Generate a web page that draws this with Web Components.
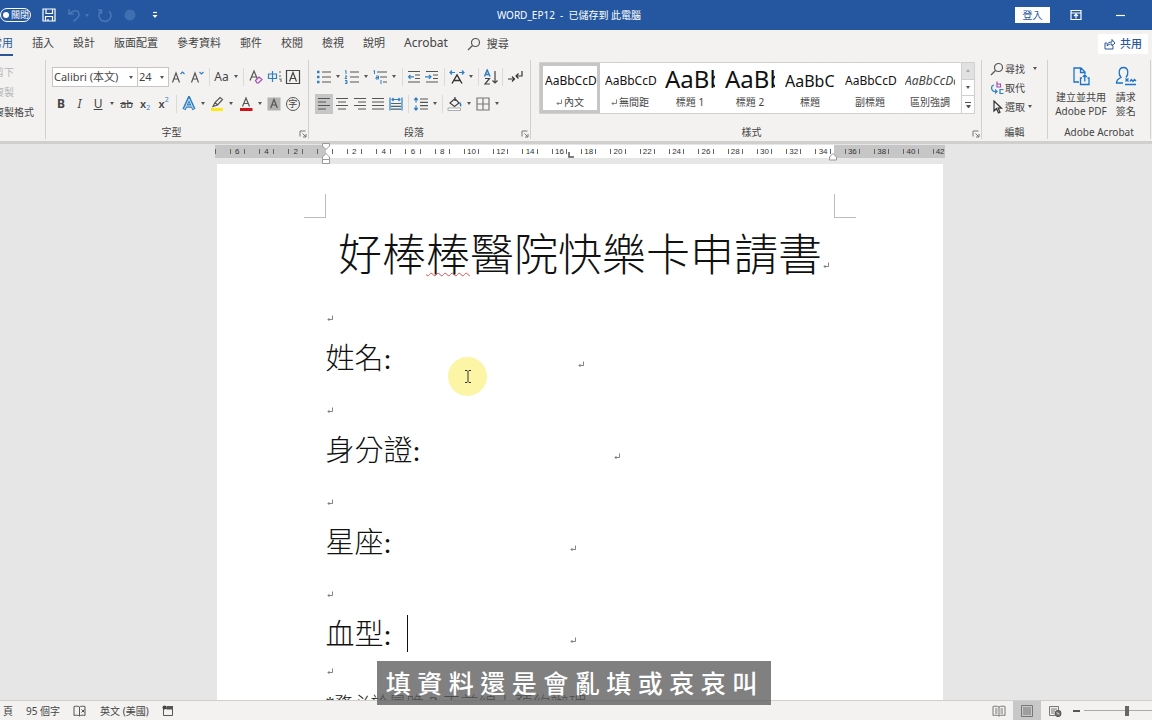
<!DOCTYPE html>
<html lang="zh-Hant">
<head>
<meta charset="utf-8">
<title>WORD_EP12</title>
<style>
html,body{margin:0;height:100%}
body{overflow:hidden;font:11px/16px "Noto Sans","Noto Sans CJK TC",sans-serif;color:#444}
</style>
</head>
<body>
<word-app></word-app>
<script>
const svg=(w,h,body)=>`<svg width="${w}" height="${h}" viewBox="0 0 ${w} ${h}" fill="none" stroke="#555" stroke-width="1.2" aria-hidden="true">${body}</svg>`;
const B='#2f7fc1';
const ICON={
save:svg(14,14,`<g stroke="#fff"><path d="M1 1h12v12H1zM4 1v4.500h6.500V1M3.500 13V8.500h7V13M6 13v-2"/></g>`),
undo:svg(16,16,`<g stroke="#4a76b5" stroke-width="1.600"><path d="M2 2v5h5M2.500 7C6 2.500 12 2.500 12 7.500c0 3-3 5-5.500 7"/></g>`),
redo:svg(16,16,`<g stroke="#4a76b5" stroke-width="1.600"><path d="M4.500 3.500A6 6 0 1 0 12 4M4.500 7V3H.8"/></g>`),
dot:svg(12,12,`<circle cx="6" cy="6" r="5.500" fill="#3f6fb0" stroke="none"/>`),
custom:svg(6,8,`<path d="M1 1.500h4" stroke="#fff"/><path d="M.5 4h5L3 7z" fill="#fff" stroke="none"/>`),
display:svg(12,12,`<g stroke="#fff"><path d="M1 1.500h10v9H1zM1 4h10M6 9.500V5.500M4 7.200l2-2 2 2"/></g>`),
min:svg(10,12,`<path d="M0 6.500h9" stroke="#fff"/>`),
search:svg(14,14,`<circle cx="8.500" cy="5.500" r="4"/><path d="M5.500 8.500L1 13"/>`),
share:svg(12,12,`<g stroke="#2b579a" stroke-width="1"><path d="M3 5H1v6h8V8M3 8c0-3 2-4 5-4V1.500L11 5 8 8V6C6 6 4.500 6.500 3 8z"/></g>`),
grow:svg(14,14,`<path d="M1.500 12.500L5 3l3.500 9.500M2.800 9h4.500"/><path d="M9.500 4L11.500 2l2 2" stroke="${B}"/>`),
shrink:svg(14,14,`<path d="M1.500 12.500L5 3l3.500 9.500M2.800 9h4.500"/><path d="M9.500 2l2 2 2-2" stroke="${B}"/>`),
clear:svg(16,16,`<path d="M2 11.500L6 2l4 9.500M3.500 8h5"/><path d="M7.500 11.500L11 8l3 2.500-3.500 3.500H9z" fill="#f3e6f6" stroke="#a24fb0"/>`),
phonetic:svg(16,16,`<g stroke="${B}"><path d="M1.500 5h8v4.500h-8zM5.500 2v11"/></g><path d="M13 2v2M13 6v2M12 10h2v3" stroke="#777"/>`),
boxA:svg(16,16,`<path d="M1.500 1.500h13v13h-13zM4.500 12.500L8 3.500l3.500 9M5.700 9.500h4.600" stroke="#444"/>`),
effA:svg(16,16,`<path d="M3 13.500L8 2.500l5 11M4.700 10h6.600" stroke="${B}" stroke-width="3.400"/><path d="M3.500 13L8 3l4.500 10M5 10h6" stroke="#cfe4f5" stroke-width="1"/>`),
pen:svg(16,16,`<path d="M2 12h12v3H2z" fill="#ffe81a" stroke="none"/><path d="M4 10.500L6 6.500 11 1.500l2.500 2L8.500 9zM6 6.500L8.500 9"/>`),
redA:svg(16,16,`<path d="M2 12h12.500v3H2z" fill="#d2121a" stroke="none"/><path d="M4.500 10.500L8 2l3.500 8.500M5.800 7.500h4.400"/>`),
shadeA:svg(16,16,`<path d="M1.500 1.500h13v13h-13z" fill="#b3b3b3" stroke="none"/><path d="M4.700 12L8 3.500l3.300 8.500M6 9h4"/>`),
bullets:svg(16,14,`<path d="M6 2h9M6 7h9M6 12h9"/><path d="M1 .8h2.500v2.500H1zM1 5.700h2.500v2.500H1zM1 10.700h2.500v2.500H1z" fill="${B}" stroke="none"/>`),
numbers:svg(16,14,`<path d="M6 2h9M6 7h9M6 12h9"/><path d="M1 1l1-.5V4M1 6h2L1 8.500h2M1 10.500h2v3H1M1.500 12H3" stroke="${B}" stroke-width="1"/>`),
multi:svg(16,14,`<path d="M5 2h10M8 7h7M11 12h4"/><path d="M1.500 1l1-.5v3.500M4 6h2.500v3H4V7.500h2M9 10v4" stroke="${B}" stroke-width="1"/>`),
outdent:svg(14,14,`<path d="M1 1.500h12M8 5h5M8 8.500h5M1 12h12"/><path d="M7 6.800H1.500M3.500 4.800l-2 2 2 2" stroke="${B}"/>`),
indent:svg(14,14,`<path d="M1 1.500h12M8 5h5M8 8.500h5M1 12h12"/><path d="M0 6.800h6M4 4.800l2 2-2 2" stroke="${B}"/>`),
asian:svg(16,14,`<path d="M3 13.500L8 5l5 8.500M5 10.500h6" stroke="#333" stroke-width="1.400"/><path d="M1 2.500h5M3 .5l-2 2 2 2M15 2.500h-5M13 .5l2 2-2 2" stroke="${B}"/>`),
sort:svg(16,16,`<path d="M1.500 7.500L4.200 1l2.800 6.500M2.500 5.500h3.500" stroke="${B}" stroke-width="1.500"/><path d="M2 9.500h4.500L2 15h5M12 2v12M9.500 11.500L12 14l2.500-2.500" stroke="#444"/>`),
marks:svg(16,16,`<path d="M1 10h6M5 7.500L7.500 10 5 12.500M15 2v5H9M11.500 4.500L9 7l2.500 2.500" stroke="#333"/>`),
left:svg(14,14,`<path d="M1 1.500h12M1 5h8M1 8.500h12M1 12h8"/>`),
center:svg(14,14,`<path d="M1 1.500h12M3 5h8M1 8.500h12M3 12h8"/>`),
right:svg(14,14,`<path d="M1 1.500h12M5 5h8M1 8.500h12M5 12h8"/>`),
justify:svg(14,14,`<path d="M1 1.500h12M1 5h12M1 8.500h12M1 12h12"/>`),
distribute:svg(14,14,`<path d="M1 .5v13M13 .5v13M3 2.500h8M4.500 1L3 2.500 4.500 4M9.500 1L11 2.500 9.500 4" stroke="${B}"/><path d="M2 6.500h10M2 9.300h10M2 12.200h10" stroke="#467"/>`),
spacing:svg(16,14,`<path d="M7 2h8M7 5.300h8M7 8.600h8M7 12h8"/><path d="M3 1v4.500M1.200 3L3 1l1.800 2M3 13V8.500M1.200 11L3 13l1.800-2" stroke="${B}"/>`),
bucket:svg(16,16,`<path d="M1 12h12.500v2.500H1z" fill="#fff" stroke="#aaa" stroke-width="1"/><path d="M3 7l5-4.500L12 7 7.500 10.500zM8 1v4" stroke="#444"/><path d="M12.500 6.500c1.500 2 1.500 3 .5 3.500" stroke="${B}" stroke-width="1.600"/>`),
borders:svg(14,14,`<path d="M1 1h12v12H1zM7 1v12M1 7h12" stroke="#777"/>`),
replace:svg(14,14,`<path d="M7 .5V6h3.500V3H7" stroke="#a24fb0"/><path d="M13.500 8.500H10V12.500h3.500M4 4C1 4.500.5 9 4 10.500h3M5 8.500l2 2-2 2" stroke="${B}"/>`),
select:svg(14,14,`<path d="M4 1v10l2.500-2.500L8.500 13l1.500-.8-1.800-4H11.500z" stroke="#333"/>`),
pdf:svg(18,20,`<g stroke="#1a73c8" stroke-width="1.300"><path d="M7 16H2V2h7l4 4v2M8.500 2v4.500H13M10 12H8.500v6.500h8.500V12h-1.500M12.800 15.500V9M10.800 11l2-2 2 2"/></g>`),
sign:svg(22,20,`<g stroke="#1a73c8" stroke-width="1.300"><path d="M8 17H1.500c0-4 2-4 4.500-5.500C3 8 3.500 1.500 8.500 1.500S14 8 11 11.500M10 18.500h11M10.500 12.500l3 3M13.500 12.500l-3 3M15 15.500l1.500-2 1.500 2 1.500-2 1.500 1.500"/></g>`),
launch:svg(8,8,`<path d="M1 6.500V1h5.500M3.500 3.500L7 7M7 4v3H4" stroke="#777" stroke-width="1"/>`),
proof:svg(14,12,`<path d="M6.500 2C5 1 3 1 1 1.500v9c2-.5 4-.5 5.500.5V2c1.500-1 3-1 5.500-.5v9c-2.500-.5-4-.5-5.500.5M8.500 4.500l3 3M11.500 4.500l-3 3" stroke-width="1"/>`),
macro:svg(12,12,`<path d="M1.500 3.500h9v7h-9z" stroke-width="1"/><path d="M4.500 1H11v3.500H4.500z" fill="#555" stroke="none"/><circle cx="2.500" cy="2.500" r="2" fill="#444" stroke="none"/>`),
read:svg(14,12,`<path d="M7 2C5 1 3 1 1 1.500v9c2-.5 4-.5 6 .5V2c2-1 4-1 6-.5v9c-2-.5-4-.5-6 .5M3 4h2.500M3 6h2.500M3 8h2.500M8.500 4H11M8.500 6H11M8.500 8H11" stroke="#777" stroke-width="1"/>`),
print:svg(14,12,`<path d="M1.500.5h11v11h-11zM3 3h8M3 5h8M3 7h8M3 9h8" stroke="#777" stroke-width="1"/>`),
web:svg(14,12,`<path d="M7 10.500H1.500v-9h9V5M3 4h6M3 6h4M3 8h3" stroke="#777" stroke-width="1"/><circle cx="10" cy="8.500" r="2.800" fill="#777"/><path d="M9 7.500l2 2" stroke="#fff" stroke-width="1"/>`)
};
const RETURN=`<svg width="6" height="7" viewBox="0 0 6 7" fill="none" stroke="#666" stroke-width=".8" aria-hidden="true"><path d="M5.500.5V4.500H1M2.500 3L1 4.500 2.500 6"/></svg>`;
const RESET=`*{box-sizing:border-box}svg{display:block;flex:none}button{font:inherit;color:inherit;background:none;border:0;padding:0;margin:0}a{color:inherit;text-decoration:none}`;
function define(name,render){
  customElements.define(name,class extends HTMLElement{
    constructor(){super();this.attachShadow({mode:'open'})}
    connectedCallback(){this.shadowRoot.innerHTML=`<style>${RESET}</style>`+render(this)}
  });
}

define('tool-button',el=>{
  const icon=el.getAttribute('icon'),drop=el.hasAttribute('drop');
  return `<style>:host{display:block;flex:none;width:${drop?28:18}px;height:20px}
  button{display:flex;align-items:center;width:100%;height:100%}
  .i{width:18px;display:flex;justify-content:center;align-items:center;flex:none;font-size:12px;white-space:nowrap}
  .d{margin-left:auto;margin-right:3px;border:2px solid transparent;border-top:3px solid #555;border-bottom:0}
  :host([on]) button{background:#c6c6c6}</style>
  <button aria-label="${el.getAttribute('label')||icon||''}"><span class="i">${icon?ICON[icon]:'<slot></slot>'}</span>${drop?'<span class="d"></span>':''}</button>`});

define('tool-sep',()=>`<style>:host{display:block;flex:none;width:6px;height:18px}i{display:block;width:1px;height:100%;margin:0 auto;background:#dadada}</style><i></i>`);

define('title-bar',()=>`<style>
:host{display:grid;grid-template-columns:1fr auto 1fr;align-items:center;height:30px;background:#2457a0;color:#fff;font-size:10px;padding-right:26px}
.q,.r{display:flex;align-items:center}
.r{justify-content:flex-end}
.toggle{display:flex;align-items:center;gap:2px;width:31px;height:14px;border:1px solid #fff;border-radius:7px;padding:0 2px;font-size:9px;line-height:12px;white-space:nowrap}
.toggle i{width:6px;height:6px;border-radius:3px;background:#fff;flex:none}
.q button{margin-right:11px}
.tri{border:2px solid transparent;border-top:3px solid #4a76b5;border-bottom:0;margin:0 8px 0 -9px}
.q .last{margin:0 0 0 5px}
.t{white-space:pre;font-size:10px;padding-left:12px}
.login{background:#fff;color:#2457a0;width:35px;height:16px;margin-right:20px;line-height:16px}
.r button+button{margin-right:34px}.r button:last-child{margin-right:0}
</style>
<div class="q"><button class="toggle" aria-label="自動儲存"><i></i><span>關閉</span></button>
<button aria-label="儲存">${ICON.save}</button><button aria-label="復原">${ICON.undo}</button><span class="tri"></span><button aria-label="重複">${ICON.redo}</button><button aria-label="觸控">${ICON.dot}</button><button class="last" aria-label="自訂">${ICON.custom}</button></div>
<div class="t">WORD_EP12  -  已儲存到 此電腦</div>
<div class="r"><button class="login">登入</button><button aria-label="功能區顯示選項">${ICON.display}</button><button aria-label="最小化">${ICON.min}</button></div>`);

define('tab-strip',()=>`<style>
:host{display:flex;align-items:center;height:27px;background:#f3f2f1;overflow:hidden;padding-right:4px}
nav{display:flex;gap:19px;margin-left:-9px;font-size:11px}
a{display:block;line-height:22px;height:24px;white-space:nowrap}
a.on{color:#2b579a;border-bottom:2px solid #2b579a}
.find{display:flex;align-items:center;gap:6px}
.share{margin-left:auto;display:flex;align-items:center;justify-content:center;gap:4px;background:#fff;color:#2b579a;width:50px;height:20px;font-weight:500}
.ac{font-size:12px}
</style><nav><a class="on" href="#">常用</a><a href="#">插入</a><a href="#">設計</a><a href="#">版面配置</a><a href="#">參考資料</a><a href="#">郵件</a><a href="#">校閱</a><a href="#">檢視</a><a href="#">說明</a><a class="ac" href="#">Acrobat</a><a class="find" href="#">${ICON.search}搜尋</a></nav>
<button class="share">${ICON.share}共用</button>`);

define('ribbon-group',el=>{
  const launcher=el.hasAttribute('launcher');
  return `<style>
:host{display:flex;flex-direction:column;flex:none;border-right:1px solid #d2d0ce;height:79px;padding:3px 6px 0;overflow:hidden}
.c{flex:1;min-height:0}
.f{display:grid;grid-template-columns:${launcher?'1fr 14px':'1fr'};align-items:center;height:14px;font-size:10px;line-height:14px;text-align:center;white-space:nowrap}
.f button{padding:3px 0 0 8px}
</style><div class="c"><slot></slot></div><div class="f"><span>${el.getAttribute('label')}</span>${launcher?`<button aria-label="更多設定">${ICON.launch}</button>`:''}</div>`});

define('style-card',el=>{
  const [prev,size,name]=['preview','size','name'].map(a=>el.getAttribute(a));
  return `<style>:host{display:block;width:60px;height:100%;flex:none}
  button{display:block;width:100%;height:100%;padding:0;border:3px solid transparent;text-align:center;overflow:hidden}
  :host([on]) button{border-color:#c6c6c6}
  .p{display:block;height:28px;line-height:${size>20?24:28}px;font-size:${size}px;color:#111;white-space:nowrap;overflow:hidden;text-align:left;margin:0 ${size>12||el.hasAttribute('soft')?2:0}px 0 2px}
  :host([soft]) .p{font-style:italic;color:#444}
  .n{display:flex;justify-content:center;align-items:center;gap:2px;font-size:10px;line-height:14px;white-space:nowrap}</style>
  <button><span class="p">${prev}</span><span class="n">${el.hasAttribute('mark')?RETURN:''}${name}</span></button>`});

define('ribbon-bar',()=>`<style>
:host{display:flex;background:#f3f2f1;height:84px;padding-top:3px;overflow:hidden}
.row{display:flex;align-items:center;justify-content:space-between;height:27px}
.clip{width:46px;padding:2px 2px 0 0}
.paste{display:flex;flex-direction:column;align-items:flex-end;font-size:10px;line-height:20px;white-space:nowrap;padding-right:9px}
.paste button:nth-child(-n+2){color:#b5b5b5;margin-right:20px}
.font{width:263px}.para{width:222px}.font,.para{padding-right:3px}.font .row{margin-right:3px}.styles{width:451px;padding:3px 3px 0 8px}.edit{width:66px}.acro{width:103px;padding:3px 0 0}
.para .row{margin-right:3px}.para .short{margin-right:25px}
.combo{display:flex}
.combo label{position:relative;display:block;border:1px solid #c8c6c4;background:#fff;height:20px}
.combo label+label{margin-left:-1px}
.combo i{position:absolute;right:4px;top:8px;border:2px solid transparent;border-top:3px solid #555;border-bottom:0}
select{appearance:none;border:0;background:none;font:11px/18px "Noto Sans","Noto Sans CJK TC",sans-serif;color:#444;padding:0 0 0 1px;margin:0;height:18px;width:100%}
.fam{width:86px}.siz{width:32px}
.gal{display:flex;height:52px;margin:-1px 3px 0 0;border:1px solid #d2d0ce;background:#fff}
.cards{display:flex;flex:1;overflow:hidden}
.scroll{display:grid;grid-template-rows:1fr 1fr 1fr;width:13px;border-left:1px solid #d2d0ce}
.scroll button{display:grid;place-content:center;border-bottom:1px solid #d2d0ce}
.scroll button:first-child{background:#e1e1e1}.scroll button:last-child{border:0}
.scroll i{border:2px solid transparent;border-top:3px solid #555;border-bottom:0}
.scroll button:first-child i{border-top:0;border-bottom:3px solid #aaa}
.scroll b{display:block;height:1px;width:6px;background:#555;margin:0 0 2px -1px}
.eds{margin:-4px 0 0 2px}
.ed{display:flex;align-items:center;gap:1px;height:19px;font-size:10px}
.ed i{border:2px solid transparent;border-top:3px solid #555;border-bottom:0;margin-left:7px}
.ed.sel i{margin-left:2px}
.ac{display:flex;justify-content:center;gap:8px;padding-right:6px}
.ac button{font-size:10px;line-height:14px;display:flex;flex-direction:column;align-items:center;padding-top:3px;white-space:nowrap}
.ac svg{margin-bottom:4px}
b,u,em{font-size:12px}s{font-size:11px}
b.x{font-size:11px;font-weight:600}
sub,sup{font-size:7px;line-height:8px;color:#2f7fc1;vertical-align:baseline}
sub{align-self:flex-end}sup{align-self:flex-start}
.ring{display:grid;place-content:center;width:14px;height:14px;border:1px solid #555;border-radius:7px;font-size:9px;line-height:12px}
</style>
<ribbon-group class="clip" label=""><div class="paste"><button>剪下</button><button>複製</button><button>複製格式</button></div></ribbon-group>
<ribbon-group class="font" label="字型" launcher>
<div class="row"><div class="combo"><label class="fam"><select aria-label="字型"><option>Calibri (本文)</option></select><i></i></label><label class="siz"><select aria-label="字型大小"><option>24</option></select><i></i></label></div>
<tool-button icon="grow" label="放大字型"></tool-button><tool-button icon="shrink" label="縮小字型"></tool-button><tool-sep></tool-sep><tool-button drop label="大小寫">Aa</tool-button><tool-sep></tool-sep><tool-button icon="clear" label="清除格式"></tool-button><tool-button icon="phonetic" label="注音標示"></tool-button><tool-button icon="boxA" label="字元框線"></tool-button></div>
<div class="row"><tool-button label="粗體"><b>B</b></tool-button><tool-button label="斜體"><em>I</em></tool-button><tool-button drop label="底線"><u>U</u></tool-button><tool-button label="刪除線"><s>ab</s></tool-button><tool-button label="下標"><b class="x">x</b><sub>2</sub></tool-button><tool-button label="上標"><b class="x">x</b><sup>2</sup></tool-button><tool-sep></tool-sep><tool-button icon="effA" drop label="文字效果"></tool-button><tool-button icon="pen" drop label="醒目提示"></tool-button><tool-button icon="redA" drop label="字型色彩"></tool-button><tool-button icon="shadeA" label="字元網底"></tool-button><tool-button label="圍繞字元"><span class="ring">字</span></tool-button></div>
</ribbon-group>
<ribbon-group class="para" label="段落" launcher>
<div class="row"><tool-button icon="bullets" drop></tool-button><tool-button icon="numbers" drop></tool-button><tool-button icon="multi" drop></tool-button><tool-sep></tool-sep><tool-button icon="outdent"></tool-button><tool-button icon="indent"></tool-button><tool-sep></tool-sep><tool-button icon="asian" drop></tool-button><tool-sep></tool-sep><tool-button icon="sort"></tool-button><tool-sep></tool-sep><tool-button icon="marks"></tool-button></div>
<div class="row short"><tool-button icon="left" on></tool-button><tool-button icon="center"></tool-button><tool-button icon="right"></tool-button><tool-button icon="justify"></tool-button><tool-button icon="distribute"></tool-button><tool-sep></tool-sep><tool-button icon="spacing" drop></tool-button><tool-sep></tool-sep><tool-button icon="bucket" drop></tool-button><tool-button icon="borders" drop></tool-button></div>
</ribbon-group>
<ribbon-group class="styles" label="樣式" launcher>
<div class="gal"><div class="cards">
<style-card on mark preview="AaBbCcD" size="12" name="內文"></style-card><style-card mark preview="AaBbCcD" size="12" name="無間距"></style-card><style-card preview="AaBb" size="24" name="標題 1"></style-card><style-card preview="AaBb" size="24" name="標題 2"></style-card><style-card preview="AaBbC" size="16" name="標題"></style-card><style-card preview="AaBbCcD" size="12" name="副標題"></style-card><style-card soft preview="AaBbCcDd" size="12" name="區別強調"></style-card></div>
<div class="scroll"><button aria-label="上一列"><i></i></button><button aria-label="下一列"><i></i></button><button aria-label="更多"><b></b><i></i></button></div></div>
</ribbon-group>
<ribbon-group class="edit" label="編輯"><div class="eds">
<button class="ed">${ICON.search}尋找<i></i></button><button class="ed">${ICON.replace}取代</button><button class="ed sel">${ICON.select}選取<i></i></button>
</div></ribbon-group>
<ribbon-group class="acro" label="Adobe Acrobat">
<div class="ac"><button>${ICON.pdf}<span>建立並共用</span><span>Adobe PDF</span></button><button>${ICON.sign}<span>請求</span><span>簽名</span></button></div>
</ribbon-group>`);

define('ruler-bar',()=>{
  let cells='';
  for(let n=-6;n<=40;n+=2)cells+=`<span class="c"><i></i><b>${n?Math.abs(n):''}</b><i></i></span>`;
  return `<style>
:host{display:block;padding-left:7px;height:23px;border-top:3px solid #d0cfcd;background:#e6e6e6}
.r{position:relative;display:flex;align-items:center;width:730px;height:13px;margin:1px auto 0;background:linear-gradient(90deg,#c6c6c6 111px,#fff 111px,#fff 619px,#c6c6c6 619px);font:8px/13px "Liberation Sans",sans-serif;color:#333}
.c{flex:1;display:flex;justify-content:space-between;align-items:center;padding:0 7px}
i{width:1px;height:5px;background:#666}
b{font-weight:400;width:0;display:flex;justify-content:center}
.s{width:8px}.s i,.e i{display:block}
.e{display:flex;align-items:center;width:19px;padding-left:7px;gap:2px}
.m{position:absolute;top:-2px;left:107px}.n{position:absolute;top:8px;left:614px}.t{position:absolute;top:7px;left:353px}
</style><div class="r"><span class="s"><i></i></span>${cells}<span class="e"><i></i>42</span>
<svg class="m" width="8" height="21" viewBox="0 0 8 21" fill="#fff" stroke="#999"><path d="M.5.500h7V3L4 6.500.5 3zM4 10.500L7.500 14v2.500h-7V14zM.5 16.500h7v4h-7z"/></svg>
<svg class="n" width="8" height="8" viewBox="0 0 8 8" fill="#fff" stroke="#999"><path d="M4 .5L7.500 4v3h-7V4z"/></svg>
<svg class="t" width="6" height="6" viewBox="0 0 6 6" fill="none" stroke="#555" stroke-width="1.500"><path d="M1 0v5h5"/></svg></div>`});

define('form-line',el=>`<style>
:host{display:flex;height:46px;font-size:29px;line-height:36px;color:#111;white-space:pre}
.g{width:${el.getAttribute('space')||0}px;display:flex;padding-left:15px}
.m{height:100%;display:flex;align-items:center;padding-left:1px}
.k{width:1px;height:37px;margin-top:-2px;background:#111}
</style><slot></slot>${el.hasAttribute('space')?`<span class="g">${el.hasAttribute('caret')?'<span class="k"></span>':''}</span>`:''}<span class="m">${RETURN}</span>`);

define('word-page',()=>`<style>
:host{display:block;flex:1;min-height:0;overflow:hidden;background:#e6e6e6;padding-left:7px;font-family:"Liberation Serif","Noto Sans CJK TC",serif;font-weight:300}
article{width:726px;height:100%;margin:0 auto;background:#fff;overflow:hidden;padding:30px 87px 0}
.corners{display:flex;justify-content:space-between;height:24px}
.corners i{width:22px;border:1px solid #bbb;border-top:0;border-left:0}
.corners i+i{border-right:0;border-left:1px solid #bbb}
.body{padding:0 22px}
h1{display:flex;justify-content:center;align-items:center;margin:9px 0 8px;padding-left:8px;font-size:44px;line-height:60px;font-weight:300;color:#111;white-space:nowrap}
h1 em{font-style:normal;text-decoration:underline wavy #e05050 1px;text-underline-offset:1px;text-decoration-skip-ink:none}
h1 svg{margin:16px 0 0 1px}
.tight{height:17px}
p{margin:0;font-size:18px;line-height:48px;color:#111;white-space:nowrap}
</style><article><div class="corners"><i></i><i></i></div><div class="body">
<h1><span>好棒<em>棒</em>醫院快樂卡申請書</span>${RETURN}</h1>
<form-line></form-line><form-line space="185">姓名:</form-line>
<form-line></form-line><form-line space="192">身分證:</form-line>
<form-line></form-line><form-line space="177">星座:</form-line>
<form-line></form-line><form-line space="177" caret>血型:</form-line>
<form-line class="tight"></form-line><p>*務必於最晚 3 天前線上預約辦理</p></div></article>`);

define('status-bar',()=>`<style>
:host{display:flex;align-items:center;height:20px;background:#f3f2f1;border-top:1px solid #d0cfcd;font-size:10px;padding-left:3px;overflow:hidden;white-space:nowrap}
.l{display:flex;align-items:center;gap:13px}
.r{margin-left:auto;display:flex;align-items:center;height:100%;margin-right:-18px}
.r button{width:28px;height:100%;display:grid;place-content:center}
.r .on{background:#c8c8c8}
.r .minus{width:14px}
.minus i{width:7px;height:2px;background:#555}
input{appearance:none;width:86px;height:14px;margin:0 0 0 1px;background:linear-gradient(#aaa,#aaa) center/100% 1px no-repeat}
input::-webkit-slider-thumb{appearance:none;width:4px;height:10px;background:#666}
</style><div class="l"><span>頁</span><span>95 個字</span>${ICON.proof}<span>英文 (美國)</span>${ICON.macro}</div>
<div class="r"><button aria-label="閱讀模式">${ICON.read}</button><button class="on" aria-label="整頁模式">${ICON.print}</button><button aria-label="Web 版面配置">${ICON.web}</button><button class="minus" aria-label="縮小"><i></i></button><input type="range" min="0" max="100" value="50" aria-label="縮放"></div>`);

define('video-caption',()=>`<style>
:host{position:absolute;left:0;right:4px;bottom:15px;display:flex;justify-content:center;pointer-events:none}
div{background:rgba(92,92,92,.78);color:#fff;width:394px;height:44px;font:500 25px/44px "Open Sans","Noto Sans CJK TC",sans-serif;text-align:center;white-space:nowrap;padding-right:5px}
</style><div>填 資 料 還 是 會 亂 填 或 哀 哀 叫</div>`);

define('pointer-halo',()=>`<style>
:host{position:absolute;left:448px;top:357px;width:39px;height:39px;border-radius:20px;background:#fbf5a5;display:grid;place-content:center;pointer-events:none}
</style><svg width="8" height="13" viewBox="0 0 8 13" fill="none" stroke="#333"><path d="M1 .5h2l1 1 1-1h2M4 1.500v10M1 12.500h2l1-1 1 1h2"/></svg>`);

define('word-app',()=>`<style>:host{position:relative;display:flex;flex-direction:column;height:100vh;overflow:hidden}</style>
<title-bar></title-bar><tab-strip></tab-strip><ribbon-bar></ribbon-bar><ruler-bar></ruler-bar><word-page></word-page><status-bar></status-bar><pointer-halo></pointer-halo><video-caption></video-caption>`);
</script>
</body>
</html>
